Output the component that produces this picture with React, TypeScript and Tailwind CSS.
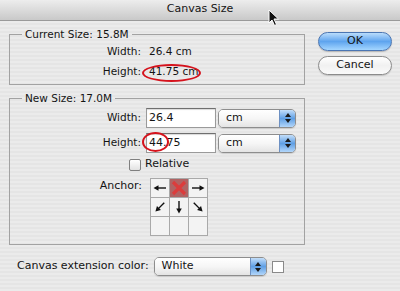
import React from 'react';

const Arrow = ({ rot }: { rot: string }) => (
  <svg width="18" height="18" viewBox="0 0 18 18" className={rot}>
    <line x1="3" y1="9" x2="12" y2="9" stroke="#111" strokeWidth="1.4" />
    <polygon points="15.5,9 10.5,6.2 10.5,11.8" fill="#111" />
  </svg>
);

const Stepper = () => (
  <div className="w-[16px] flex flex-col items-center justify-center gap-[2px] bg-linear-to-b from-[#c3def9] via-[#5f9fe4] to-[#b2d6fa] border-l border-[#6d90c2]">
    <svg width="6" height="4" viewBox="0 0 6 4">
      <polygon points="3,0 6,4 0,4" fill="#1a1a1a" />
    </svg>
    <svg width="6" height="4" viewBox="0 0 6 4">
      <polygon points="0,0 6,0 3,4" fill="#1a1a1a" />
    </svg>
  </div>
);

const Select = ({ value, className }: { value: string; className: string }) => (
  <div
    className={`flex rounded-[5px] border border-[#8d8d8d] overflow-hidden shadow-[0_1px_1px_rgba(0,0,0,0.12)] ${className}`}
  >
    <div className="flex-1 flex items-center pl-[7px] bg-linear-to-b from-white via-[#f6f6f6] to-[#e4e4e4] text-[11px]">
      {value}
    </div>
    <Stepper />
  </div>
);

const Input = ({ value, className }: { value: string; className: string }) => (
  <div
    className={`flex items-center pl-[2px] bg-white border border-[#9a9a9a] border-t-[#6f6f6f] shadow-[inset_0_1px_1px_rgba(0,0,0,0.15)] text-[11px] ${className}`}
  >
    {value}
  </div>
);

export default function App() {
  return (
    <div className="relative w-[400px] h-[291px] overflow-hidden bg-[#e9e9e9] bg-[repeating-linear-gradient(0deg,#ebebeb_0px,#ebebeb_2px,#e5e5e5_2px,#e5e5e5_4px)] font-['DejaVu_Sans',sans-serif] text-[10.5px] text-[#141414]">
      {/* title bar */}
      <div className="h-[21px] flex items-center justify-center border-b border-[#999] bg-linear-to-b from-[#ededed] to-[#c9c9c9] text-[11px] pb-[2px]">
        Canvas Size
      </div>

      <div className="flex pt-[7px]">
        {/* left column */}
        <div className="ml-[9px] w-[296px] flex flex-col">
          <fieldset className="border border-[#a2a2a2] pb-[2px]">
            <legend className="ml-[12px] px-[3px] leading-[13px]">Current Size: 15.8M</legend>
            <div className="flex items-center h-[20px] mt-[1px]">
              <span className="w-[131px] text-right">Width:</span>
              <span className="ml-[8px]">26.4 cm</span>
            </div>
            <div className="flex items-center h-[20px]">
              <span className="w-[131px] text-right">Height:</span>
              <span className="ml-[8px]">41.75 cm</span>
            </div>
          </fieldset>

          <fieldset className="mt-[7px] border border-[#a2a2a2] pb-[8px]">
            <legend className="ml-[12px] px-[3px] leading-[13px]">New Size: 17.0M</legend>
            <div className="flex items-center h-[20px] mt-[3px]">
              <span className="w-[131px] text-right">Width:</span>
              <Input value="26.4" className="ml-[5px] w-[70px] h-[20px]" />
              <Select value="cm" className="ml-[2px] w-[78px] h-[19px]" />
            </div>
            <div className="flex items-center h-[20px] mt-[5px]">
              <span className="w-[131px] text-right">Height:</span>
              <Input value="44.75" className="ml-[5px] w-[70px] h-[20px]" />
              <Select value="cm" className="ml-[2px] w-[78px] h-[19px]" />
            </div>
            <div className="flex items-center h-[15px] mt-[4px] pl-[119px] gap-[4px]">
              <span className="w-[12px] h-[12px] rounded-[2px] border border-[#7f7f7f] bg-linear-to-b from-white to-[#e2e2e2]" />
              <span className="text-[11px]">Relative</span>
            </div>
            <div className="flex mt-[6px]">
              <span className="w-[132px] text-right text-[11px] leading-[13px] pt-[1px]">Anchor:</span>
              <div className="ml-[8px] grid grid-cols-3 gap-px bg-[#a9a9a9] border border-[#a9a9a9]">
                <div className="w-[18px] h-[18px] bg-[#f3f3f3] flex items-center justify-center">
                  <Arrow rot="rotate-180" />
                </div>
                <div className="w-[18px] h-[18px] bg-[#b06464] flex items-center justify-center">
                  <svg width="18" height="18" viewBox="0 0 18 18">
                    <path d="M3 3 L15 15 M15 3 L3 15" stroke="#dc3c3c" strokeWidth="3.2" />
                  </svg>
                </div>
                <div className="w-[18px] h-[18px] bg-[#f3f3f3] flex items-center justify-center">
                  <Arrow rot="rotate-0" />
                </div>
                <div className="w-[18px] h-[18px] bg-[#f3f3f3] flex items-center justify-center">
                  <Arrow rot="rotate-135" />
                </div>
                <div className="w-[18px] h-[18px] bg-[#f3f3f3] flex items-center justify-center">
                  <Arrow rot="rotate-90" />
                </div>
                <div className="w-[18px] h-[18px] bg-[#f3f3f3] flex items-center justify-center">
                  <Arrow rot="rotate-45" />
                </div>
                <div className="w-[18px] h-[18px] bg-[#f3f3f3]" />
                <div className="w-[18px] h-[18px] bg-[#f3f3f3]" />
                <div className="w-[18px] h-[18px] bg-[#f3f3f3]" />
              </div>
            </div>
          </fieldset>

          <div className="flex items-center h-[19px] mt-[12px]">
            <span className="ml-[8px] text-[11px]">Canvas extension color:</span>
            <Select value="White" className="ml-[5px] w-[113px] h-[19px]" />
            <span className="ml-[5px] w-[12px] h-[12px] bg-white border border-[#8a8a8a]" />
          </div>
        </div>

        {/* right column */}
        <div className="ml-[13px] mt-[4px] w-[74px] flex flex-col gap-[5px]">
          <button className="h-[19px] rounded-full border border-[#4b76b3] bg-linear-to-b from-[#b9dcfb] via-[#5ea4ee] to-[#a4d6ff] text-[11px] shadow-[0_1px_1px_rgba(0,0,0,0.2)]">
            OK
          </button>
          <button className="h-[19px] rounded-full border border-[#8c8c8c] bg-linear-to-b from-white via-[#f1f1f1] to-[#fafafa] text-[11px] shadow-[0_1px_1px_rgba(0,0,0,0.15)]">
            Cancel
          </button>
        </div>
      </div>

      {/* annotation ellipses */}
      <div className="absolute left-[142px] top-[64px] w-[59px] h-[18px] rounded-[50%] border-2 border-[#d5121c]" />
      <div className="absolute left-[142px] top-[132px] w-[27px] h-[20px] rounded-[50%] border-2 border-[#d5121c]" />

      {/* mouse cursor */}
      <svg className="absolute left-[268px] top-[9px]" width="12" height="18" viewBox="0 0 12 18">
        <path d="M1 1 L1 14 L4 11 L6.5 16.5 L8.5 15.5 L6 10 L10.5 10 Z" fill="#111" stroke="#fff" strokeWidth="1" />
      </svg>
    </div>
  );
}
